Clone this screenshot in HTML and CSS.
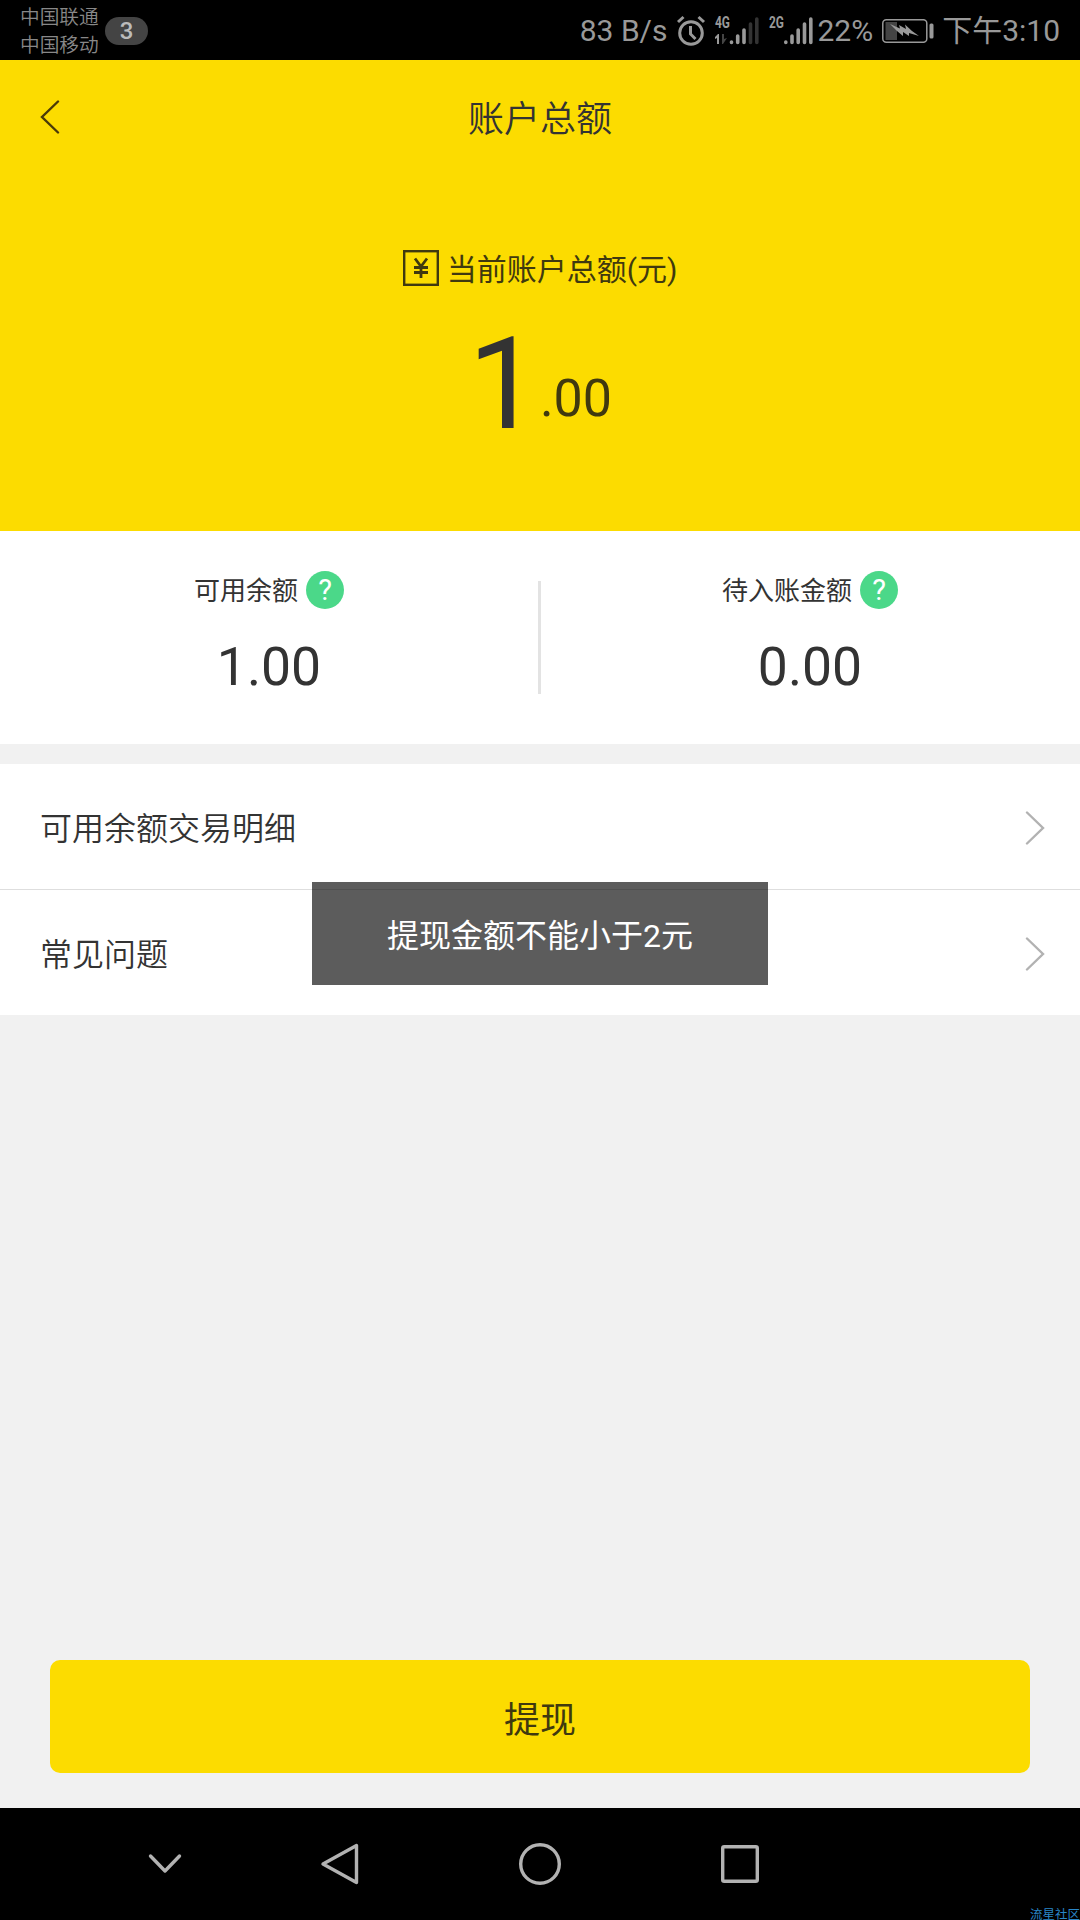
FILE: index.html
```html
<!DOCTYPE html>
<html lang="zh-CN">
<head>
    <meta charset="UTF-8">
    <meta name="viewport" content="width=device-width, initial-scale=1.0">
    <title>账户总额</title>
    <link rel="stylesheet" href="styles.css">
</head>
<body>
    <div class="status-bar">
        <div class="carriers">
            <p>中国联通</p>
            <p>中国移动</p>
        </div>
        <span class="badge">3</span>
        <span class="speed">83 B/s</span>
        <svg class="alarm" width="30" height="32" viewBox="0 0 30 32" fill="none" stroke="#999" stroke-width="3">
            <circle cx="15" cy="18" r="11.3"/>
            <path d="M14.5 11v8l5 5M2 7l5.500-5M28 7l-5.500-5"/>
        </svg>
        <svg class="signal" width="46" height="40" viewBox="0 -5 46 40">
            <text class="net" x="1" y="12" textLength="15" lengthAdjust="spacingAndGlyphs">4G</text>
            <path fill="#999" d="M5 18v10H3v-6l-2 1v-2l3-3z"/>
            <path fill="#444" d="M8 18h2v5l3-1-4 6H8z"/>
            <g stroke-width="3.600" stroke-linecap="round">
                <path stroke="#999" d="M17.500 26v.5M23.700 20v6.500M30 14v12.500"/>
                <path stroke="#333" d="M36.500 8v18.500M42.800 3v23.500"/>
            </g>
        </svg>
        <svg class="signal" width="46" height="40" viewBox="0 -5 46 40">
            <text class="net" x="1" y="12" textLength="15" lengthAdjust="spacingAndGlyphs">2G</text>
            <path stroke="#999" stroke-width="3.600" stroke-linecap="round" d="M17.800 26v.5M24 20v6.500M30.200 14v12.500M36.500 8v18.500M42.800 3v23.500"/>
        </svg>
        <span class="percent">22%</span>
        <svg class="battery" width="52" height="24" viewBox="0 0 52 24">
            <rect x=".8" y=".8" width="44" height="22.400" rx="3.500" fill="none" stroke="#999" stroke-width="1.500"/>
            <path fill="#444" d="M3.500 3H15v18H3.500z"/>
            <path fill="#999" d="M8 5l10 4.500-1-3.500 7 4-1-4.500 7 6.500 7 5-10-3 0 3-6-4 0 4-6-5z"/>
            <rect x="47.500" y="4.500" width="4" height="15" rx="1.500" fill="#999"/>
        </svg>
        <span class="time">下午3:10</span>
    </div>

    <div class="header">
        <div class="title-bar">
            <svg class="back" width="20" height="34" viewBox="0 0 20 34" fill="none" stroke="#4a3a08" stroke-width="2.400" stroke-linecap="round">
                <path d="M18 1.500L2 17l16 15.500"/>
            </svg>
            <h1>账户总额</h1>
        </div>
        <p class="total-label">
            <svg width="36" height="36" viewBox="0 0 36 36" fill="none" stroke="#40390f">
                <rect x="1.200" y="1.200" width="33.600" height="33.600" stroke-width="2.400"/>
                <path stroke-width="2.800" d="M12 8.500l6 8 6-8M18 16v12M11 17.500h14M11 22.500h14"/>
            </svg>
            <span>当前账户总额(元)</span>
        </p>
        <p class="total"><span class="yuan">1</span><span class="cents">.00</span></p>
    </div>

    <div class="balances">
        <div class="balance">
            <p class="label"><span>可用余额</span><span class="help">?</span></p>
            <p class="amount">1.00</p>
        </div>
        <div class="separator"></div>
        <div class="balance">
            <p class="label"><span>待入账金额</span><span class="help">?</span></p>
            <p class="amount">0.00</p>
        </div>
    </div>

    <div class="list">
        <div class="row">
            <span>可用余额交易明细</span>
            <svg width="20" height="34" viewBox="0 0 20 34" fill="none" stroke="#b2b2b2" stroke-width="2.400" stroke-linecap="round">
                <path d="M2 1.500L18 17 2 32.500"/>
            </svg>
        </div>
        <div class="row">
            <span>常见问题</span>
            <svg width="20" height="34" viewBox="0 0 20 34" fill="none" stroke="#b2b2b2" stroke-width="2.400" stroke-linecap="round">
                <path d="M2 1.500L18 17 2 32.500"/>
            </svg>
        </div>
    </div>

    <button class="withdraw">提现</button>

    <div class="nav-bar">
        <svg class="hide" viewBox="0 0 44 44"><path d="M7.500 14L22 29l14.500-15"/></svg>
        <svg viewBox="0 0 44 44"><path d="M38.500 3.500v37L5 22z"/></svg>
        <svg viewBox="0 0 44 44"><circle cx="22" cy="22" r="19.300"/></svg>
        <svg viewBox="0 0 44 44"><rect x="4.700" y="4.700" width="34.600" height="34.600" rx="1.500"/></svg>
    </div>

    <div class="toast">提现金额不能小于2元</div>
    <span class="watermark">流星社区</span>
</body>
</html>
```

FILE: styles.css
```css
* {
    box-sizing: border-box;
    border: 0;
    padding: 0;
    margin: 0;
}

:root {
    --yellow: #fcdc00;
    --text-color: #333;
    --status-color: #999;
}

body {
    position: relative;
    display: flex;
    flex-direction: column;
    width: 1080px;
    height: 1920px;
    overflow: hidden;
    background-color: #f1f1f1;
    color: var(--text-color);
    font-family: Roboto, "Noto Sans CJK SC", sans-serif;
    font-weight: 400;
}

svg {
    display: block;
    flex: none;
}

/* status bar */
.status-bar {
    display: flex;
    align-items: center;
    height: 60px;
    padding: 2px 20px 0;
    background-color: #000;
    color: var(--status-color);
    font-size: 30px;
    line-height: 60px;
    white-space: nowrap;
}

.carriers {
    width: 85px;
    padding-top: 2px;
    color: #888;
    font-size: 19.700px;
    font-weight: 350;
    line-height: 28px;
}

.badge {
    width: 43px;
    height: 28px;
    border-radius: 14px;
    background-color: #444;
    color: #bbb;
    font-size: 24px;
    font-weight: 500;
    line-height: 28px;
    text-align: center;
}

.speed {
    margin-left: auto;
}

.alarm {
    margin-left: 9px;
}

.signal {
    margin-left: 8px;
}

.net {
    fill: #999;
    font-size: 16px;
    font-weight: 700;
}

.percent {
    margin-left: 3px;
}

.battery {
    margin-left: 9px;
}

.time {
    margin-left: 8px;
}

/* header */
.header {
    height: 471px;
    background-color: var(--yellow);
}

.title-bar {
    display: flex;
    align-items: center;
    height: 114px;
    padding: 0 40px;
}

h1 {
    flex: 1;
    margin: -2px 20px 0 0;
    font-size: 36px;
    font-weight: 350;
    text-align: center;
}

.total-label {
    display: flex;
    justify-content: center;
    align-items: center;
    gap: 8px;
    height: 44px;
    margin-top: 72px;
    font-size: 30px;
    color: #40390f;
}

.total-label span {
    margin-top: -2px;
}

.total {
    display: flex;
    justify-content: center;
    align-items: baseline;
    margin-top: 19px;
    line-height: 150px;
}

.yuan {
    font-size: 128px;
}

.cents {
    position: relative;
    top: -12px;
    font-size: 52px;
    color: #40390f;
}

/* balances */
.balances {
    display: flex;
    height: 213px;
    padding-right: 1px;
    background-color: #fff;
}

.balance {
    flex: 1;
    padding-top: 38px;
    text-align: center;
}

.separator {
    width: 3px;
    height: 113px;
    margin-top: 50px;
    background-color: #e3e3e3;
}

.label {
    display: flex;
    justify-content: center;
    align-items: center;
    gap: 8px;
    height: 42px;
    font-size: 26px;
}

.label span:first-child {
    margin-top: -3px;
}

.help {
    width: 38px;
    height: 38px;
    border-radius: 50%;
    background-color: #4bd889;
    color: #fff;
    font-size: 29px;
    line-height: 38px;
    text-align: center;
}

.amount {
    margin-top: 24px;
    font-size: 53.500px;
    line-height: 64px;
}

/* list */
.list {
    margin-top: 20px;
    background-color: #fff;
}

.row {
    display: flex;
    justify-content: space-between;
    align-items: center;
    height: 125px;
    padding: 3px 35px 0 40px;
    font-size: 32px;
    font-weight: 350;
}

.row span {
    margin-top: -4px;
}

.row + .row {
    height: 126px;
    border-top: 1px solid #dedede;
}

.withdraw {
    height: 113px;
    margin: auto 50px 35px;
    border-radius: 10px;
    background-color: var(--yellow);
    color: #40390f;
    font-family: inherit;
    font-size: 36px;
}

/* navigation bar */
.nav-bar {
    display: flex;
    gap: 156px;
    height: 112px;
    padding-left: 143px;
    align-items: center;
    background-color: #000;
}

.nav-bar svg {
    width: 44px;
    height: 44px;
    fill: none;
    stroke: #b2b2b2;
    stroke-width: 3.400;
    stroke-linecap: round;
    stroke-linejoin: round;
}

.nav-bar .hide {
    margin-right: -25px;
}

.toast {
    position: absolute;
    top: 882px;
    left: 312px;
    width: 456px;
    height: 103px;
    background-color: rgba(0, 0, 0, 0.64);
    color: #fff;
    font-size: 32px;
    line-height: 108px;
    text-align: center;
}

.watermark {
    position: absolute;
    right: 0;
    bottom: -4px;
    color: #2a86c8;
    font-size: 12.500px;
    line-height: 18px;
}
```
